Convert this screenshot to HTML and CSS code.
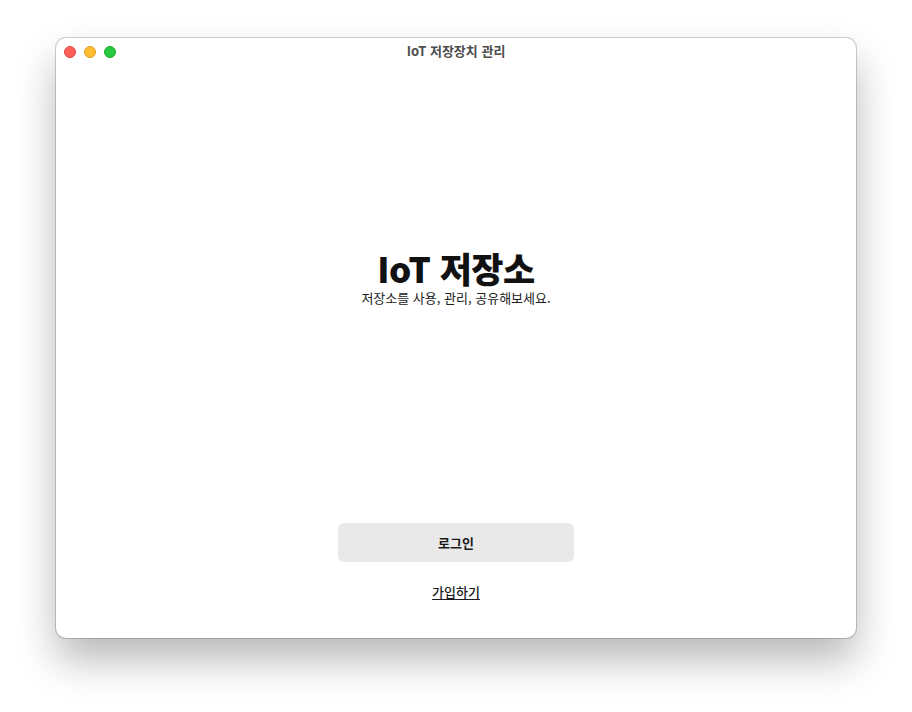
FILE: index.html
```html
<!DOCTYPE html>
<html lang="ko">
<head>
<meta charset="utf-8">
<title>IoT 저장장치 관리</title>
<link rel="stylesheet" href="styles.css">
</head>
<body>
<div class="window">
  <div class="titlebar">
    <div class="lights">
      <span class="light red"></span>
      <span class="light yellow"></span>
      <span class="light green"></span>
    </div>
    <div class="title">IoT 저장장치 관리</div>
  </div>
  <main class="content">
    <section class="hero">
      <h1 class="heading">IoT 저장소</h1>
      <p class="subtitle">저장소를 사용, 관리, 공유해보세요.</p>
    </section>
    <div class="spacer"></div>
    <button class="login">로그인</button>
    <a class="signup" href="#">가입하기</a>
  </main>
</div>
</body>
</html>
```
FILE: styles.css
```css
html, body {
  margin: 0;
  padding: 0;
  background: #ffffff;
}
body {
  width: 912px;
  height: 712px;
  padding: 38px 56px 0;
  box-sizing: border-box;
  font-family: "Noto Sans CJK KR", "Noto Sans", sans-serif;
  color: #1a1a1a;
}
.window {
  width: 800px;
  height: 600px;
  background: #ffffff;
  border-radius: 10px;
  box-shadow: 0 0 0 1px rgba(0,0,0,0.18), 0 22px 40px rgba(0,0,0,0.28);
  display: flex;
  flex-direction: column;
  overflow: hidden;
}
.titlebar {
  height: 28px;
  flex: none;
  position: relative;
  display: flex;
  align-items: center;
  justify-content: center;
}
.lights {
  position: absolute;
  left: 8px;
  top: 8px;
  display: flex;
  gap: 8px;
}
.light {
  width: 12px;
  height: 12px;
  border-radius: 50%;
  box-sizing: border-box;
}
.red { background: #fe5f57; border: 0.5px solid #e0443e; }
.yellow { background: #febc2e; border: 0.5px solid #dea123; }
.green { background: #28c840; border: 0.5px solid #1aab29; }
.title {
  font-size: 13px;
  font-weight: 700;
  color: #4d4d4d;
  line-height: 16px;
  margin-top: -2px;
}
.content {
  flex: 1;
  display: flex;
  flex-direction: column;
  align-items: center;
  padding-bottom: 37px;
}
.hero {
  margin-top: 182px;
  display: flex;
  flex-direction: column;
  align-items: center;
}
.heading {
  margin: 0;
  font-size: 35px;
  font-weight: 900;
  line-height: 40px;
  color: #111111;
  letter-spacing: -0.5px;
}
.subtitle {
  margin: 1px 0 0;
  font-size: 13px;
  line-height: 18px;
  color: #222222;
}
.spacer { flex: 1; }
.login {
  width: 236px;
  height: 39px;
  border: none;
  border-radius: 6px;
  background: #e9e9e9;
  font-family: inherit;
  font-size: 13px;
  font-weight: 700;
  color: #1a1a1a;
  padding: 0;
}
.signup {
  margin-top: 21px;
  font-size: 13px;
  line-height: 18px;
  font-weight: 500;
  color: #1a1a1a;
  text-decoration: underline;
  text-underline-offset: 2px;
}
```
